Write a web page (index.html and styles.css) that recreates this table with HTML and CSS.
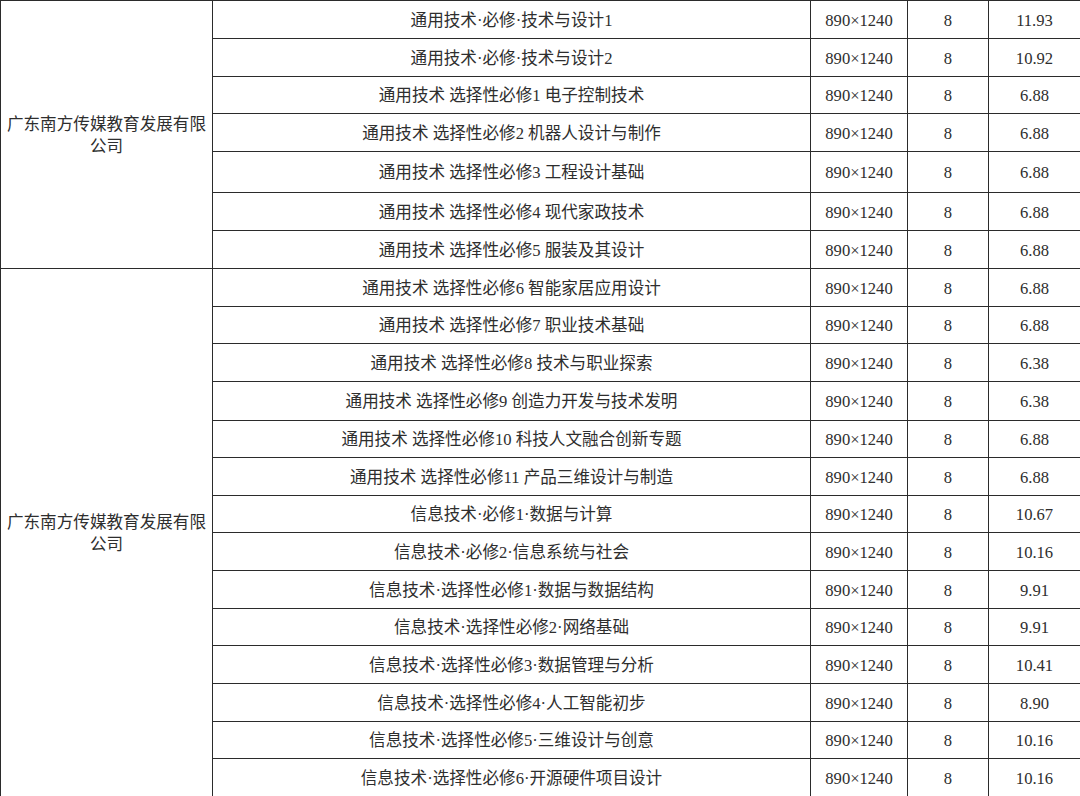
FILE: index.html
```html
<!DOCTYPE html>
<html lang="zh">
<head>
<meta charset="utf-8">
<title>教材目录</title>
<link rel="stylesheet" href="styles.css">
</head>
<body>
<table class="books">
<colgroup>
<col class="c-pub"><col class="c-title"><col class="c-size"><col class="c-pages"><col class="c-price">
</colgroup>
<tbody>
<tr class="h38"><td class="pub" rowspan="7">广东南方传媒教育发展有限公司</td><td>通用技术·必修·技术与设计1</td><td>890×1240</td><td>8</td><td>11.93</td></tr>
<tr class="h38"><td>通用技术·必修·技术与设计2</td><td>890×1240</td><td>8</td><td>10.92</td></tr>
<tr class="h37"><td>通用技术 选择性必修1 电子控制技术</td><td>890×1240</td><td>8</td><td>6.88</td></tr>
<tr class="h38"><td>通用技术 选择性必修2 机器人设计与制作</td><td>890×1240</td><td>8</td><td>6.88</td></tr>
<tr class="h41"><td>通用技术 选择性必修3 工程设计基础</td><td>890×1240</td><td>8</td><td>6.88</td></tr>
<tr class="h38"><td>通用技术 选择性必修4 现代家政技术</td><td>890×1240</td><td>8</td><td>6.88</td></tr>
<tr class="h38"><td>通用技术 选择性必修5 服装及其设计</td><td>890×1240</td><td>8</td><td>6.88</td></tr>
<tr class="h38"><td class="pub" rowspan="14">广东南方传媒教育发展有限公司</td><td>通用技术 选择性必修6 智能家居应用设计</td><td>890×1240</td><td>8</td><td>6.88</td></tr>
<tr class="h37"><td>通用技术 选择性必修7 职业技术基础</td><td>890×1240</td><td>8</td><td>6.88</td></tr>
<tr class="h38"><td>通用技术 选择性必修8 技术与职业探索</td><td>890×1240</td><td>8</td><td>6.38</td></tr>
<tr class="h39"><td>通用技术 选择性必修9 创造力开发与技术发明</td><td>890×1240</td><td>8</td><td>6.38</td></tr>
<tr class="h37"><td>通用技术 选择性必修10 科技人文融合创新专题</td><td>890×1240</td><td>8</td><td>6.88</td></tr>
<tr class="h38"><td>通用技术 选择性必修11 产品三维设计与制造</td><td>890×1240</td><td>8</td><td>6.88</td></tr>
<tr class="h37"><td>信息技术·必修1·数据与计算</td><td>890×1240</td><td>8</td><td>10.67</td></tr>
<tr class="h38"><td>信息技术·必修2·信息系统与社会</td><td>890×1240</td><td>8</td><td>10.16</td></tr>
<tr class="h38"><td>信息技术·选择性必修1·数据与数据结构</td><td>890×1240</td><td>8</td><td>9.91</td></tr>
<tr class="h37"><td>信息技术·选择性必修2·网络基础</td><td>890×1240</td><td>8</td><td>9.91</td></tr>
<tr class="h38"><td>信息技术·选择性必修3·数据管理与分析</td><td>890×1240</td><td>8</td><td>10.41</td></tr>
<tr class="h38"><td>信息技术·选择性必修4·人工智能初步</td><td>890×1240</td><td>8</td><td>8.90</td></tr>
<tr class="h37"><td>信息技术·选择性必修5·三维设计与创意</td><td>890×1240</td><td>8</td><td>10.16</td></tr>
<tr class="h38"><td>信息技术·选择性必修6·开源硬件项目设计</td><td>890×1240</td><td>8</td><td>10.16</td></tr>
</tbody>
</table>
</body>
</html>
```

FILE: styles.css
```css
html, body {
  margin: 0;
  padding: 0;
  background: #ffffff;
}

.books {
  width: 1080px;
  border-collapse: collapse;
  table-layout: fixed;
  font-family: "Liberation Serif", "Noto Sans CJK SC", serif;
  font-size: 16.6px;
  color: #2e2e2e;
}

.c-pub { width: 212px; }
.c-title { width: 598px; }
.c-size { width: 97px; }
.c-pages { width: 81px; }
.c-price { width: 92px; }

.books td {
  border: 1px solid #2b2b2b;
  padding: 2px 4px 0;
  text-align: center;
  vertical-align: middle;
  line-height: 22px;
  white-space: nowrap;
  box-sizing: border-box;
}

.books td.pub {
  white-space: normal;
  word-break: break-all;
}

.h37 { height: 37px; }
.h38 { height: 38px; }
.h39 { height: 39px; }
.h41 { height: 41px; }
```
